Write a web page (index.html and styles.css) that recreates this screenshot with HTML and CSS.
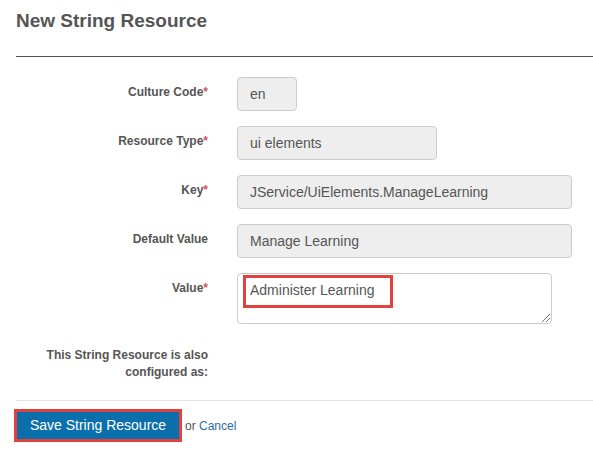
FILE: index.html
```html
<!DOCTYPE html>
<html>
<head>
<meta charset="utf-8">
<link rel="stylesheet" href="styles.css">
</head>
<body>
<div class="page">
  <div class="header">
    <h1 class="title">New String Resource</h1>
  </div>
  <form class="form">
    <div class="row">
      <label class="label">Culture Code<span class="req">*</span></label>
      <div class="field"><div class="input w-sm">en</div></div>
    </div>
    <div class="row">
      <label class="label">Resource Type<span class="req">*</span></label>
      <div class="field"><div class="input w-md">ui elements</div></div>
    </div>
    <div class="row">
      <label class="label">Key<span class="req">*</span></label>
      <div class="field"><div class="input w-lg">JService/UiElements.ManageLearning</div></div>
    </div>
    <div class="row">
      <label class="label">Default Value</label>
      <div class="field"><div class="input w-lg">Manage Learning</div></div>
    </div>
    <div class="row">
      <label class="label">Value<span class="req">*</span></label>
      <div class="field">
        <div class="textarea-wrap">
          <div class="textarea">Administer Learning</div>
          <span class="grip"></span>
          <span class="mark mark-text"></span>
        </div>
      </div>
    </div>
    <div class="row row-note">
      <label class="label note">This String Resource is also configured as:</label>
      <div class="field"></div>
    </div>
  </form>
  <div class="actions">
    <div class="btn-mark"><button type="button" class="btn">Save String Resource</button></div>
    <span class="or">or <a class="cancel" href="#">Cancel</a></span>
  </div>
</div>
</body>
</html>
```
FILE: styles.css
```css
html, body {
  margin: 0;
  padding: 0;
  background: #fff;
}
body {
  font-family: "Liberation Sans", Arial, sans-serif;
  color: #555;
}
.page {
  padding-left: 16px;
  width: 577px;
}
.header {
  height: 57px;
  border-bottom: 1px solid #555;
  box-sizing: border-box;
}
.title {
  margin: 0;
  padding-top: 9px;
  font-size: 19px;
  line-height: 24px;
  font-weight: bold;
  color: #555;
}
.form {
  padding-top: 20px;
  display: flex;
  flex-direction: column;
  gap: 15px;
}
.row {
  display: grid;
  grid-template-columns: 192px 1fr;
  column-gap: 29px;
}
.label {
  text-align: right;
  font-size: 12px;
  font-weight: bold;
  line-height: 14px;
  padding-top: 8px;
  color: #555;
}
.req {
  color: #d9534f;
}
.input {
  box-sizing: border-box;
  height: 34px;
  background: #eee;
  border: 1px solid #ccc;
  border-radius: 4px;
  padding: 0 12px;
  font-size: 14px;
  line-height: 32px;
  color: #555;
  white-space: nowrap;
}
.w-sm { width: 60px; }
.w-md { width: 200px; }
.w-lg { width: 335px; }
.textarea-wrap {
  position: relative;
  width: 315px;
  height: 51px;
}
.textarea {
  box-sizing: border-box;
  width: 315px;
  height: 51px;
  border: 1px solid #ccc;
  border-radius: 4px;
  background: #fff;
  padding: 6px 12px;
  font-size: 14px;
  line-height: 20px;
  color: #555;
}
.grip {
  position: absolute;
  right: 2px;
  bottom: 2px;
  width: 8px;
  height: 8px;
  background: linear-gradient(135deg, transparent 0 45%, #777 45% 55%, transparent 55% 70%, #777 70% 80%, transparent 80%);
}
.mark {
  position: absolute;
  border: 3px solid #e2423e;
  box-sizing: border-box;
}
.mark-text {
  left: 6px;
  top: 2px;
  width: 150px;
  height: 33px;
}
.row-note {
  margin-top: 8px;
}
.note {
  padding-top: 0;
  line-height: 17px;
}
.actions {
  margin-top: 19px;
  border-top: 1px solid #e5e5e5;
  padding-top: 8px;
  display: flex;
  align-items: center;
}
.btn-mark {
  margin-left: -2px;
  border: 3px solid #e2423e;
  display: flex;
}
.btn {
  width: 162px;
  height: 27px;
  border: 0;
  margin: 0;
  padding: 0;
  background: #0b6fab;
  color: #fff;
  font-family: "Liberation Sans", Arial, sans-serif;
  font-size: 14px;
  line-height: 27px;
  text-align: center;
}
.or {
  margin-left: 3px;
  font-size: 12px;
  color: #555;
}
.cancel {
  color: #2a6da8;
  text-decoration: none;
}
```
